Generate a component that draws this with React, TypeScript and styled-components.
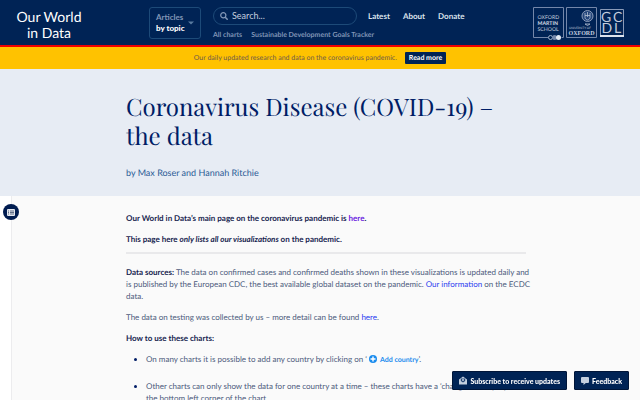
import React from "react";
import styled, { createGlobalStyle } from "styled-components";

const GlobalStyle = createGlobalStyle`
  *, *::before, *::after { box-sizing: border-box; }
  body {
    margin: 0;
    background: #fafafa;
    color: #4d5a7c;
    font-family: Lato, "Liberation Sans", sans-serif;
    font-size: 8px;
    line-height: 12px;
    text-rendering: geometricPrecision;
  }
  a { text-decoration: none; }
`;

const Page = styled.div`
  display: flex;
  flex-direction: column;
  height: 100vh;
  overflow: hidden;
`;

const Header = styled.header`
  display: flex;
  flex: none;
  align-items: flex-start;
  height: 47px;
  padding: 7px 15px 0 16px;
  background: #002355;
  border-bottom: 2px solid #f00000;
`;

const SiteName = styled.a`
  width: 66px;
  margin-right: 67px;
  padding-top: 2px;
  color: #fff;
  font-size: 14px;
  line-height: 16px;
  text-align: center;
  white-space: nowrap;
`;

const TopicButton = styled.button`
  display: flex;
  align-items: center;
  justify-content: space-between;
  width: 52px;
  height: 32px;
  margin-right: 12px;
  padding: 0 6px;
  border: 1px solid #1d4a78;
  border-radius: 3px;
  background: transparent;
  color: #8297b8;
  font: 700 8px/11px Lato, sans-serif;
  text-align: left;
  white-space: nowrap;

  strong { display: block; color: #fff; }
  svg { flex: none; }
`;

const SearchArea = styled.div`
  width: 144px;
  margin-right: 11px;
`;

const SearchBox = styled.label`
  display: flex;
  align-items: center;
  gap: 4px;
  width: 100%;
  height: 18px;
  padding: 0 6px;
  border: 1px solid #1d4a78;
  border-radius: 9px;

  input {
    width: 100%;
    min-width: 0;
    padding: 0;
    border: 0;
    outline: 0;
    background: transparent;
    color: #fff;
    font: 400 9px/12px Lato, sans-serif;
  }
  input::placeholder { color: #c5cfdf; opacity: 1; }
  svg { flex: none; }
`;

const SubLinks = styled.nav`
  display: flex;
  gap: 9px;
  margin-top: 4px;
  white-space: nowrap;

  a { color: #7f94b5; font-size: 7px; font-weight: 700; }
`;

const MainNav = styled.nav`
  display: flex;
  gap: 13px;
  padding-top: 3px;

  a { color: #dbe2ec; font-size: 8px; font-weight: 700; }
`;

const Partners = styled.div`
  display: flex;
  gap: 2px;
  margin-left: auto;

  a, svg { display: block; }
`;

const Alert = styled.div`
  display: flex;
  flex: none;
  align-items: center;
  justify-content: center;
  gap: 8px;
  height: 22px;
  background: #ffc200;
  color: #6e5a4c;
  font-size: 7px;
`;

const ReadMore = styled.a`
  padding: 0 4px;
  border-radius: 1px;
  background: #002355;
  color: #fff;
  font-weight: 700;
`;

const Banner = styled.div`
  flex: none;
  padding: 24px 0 17px 12px;
  background: #e7ecf4;
`;

const Column = styled.div`
  width: 100%;
  max-width: 400px;
  margin: 0 auto;
`;

const Title = styled.h1`
  margin: 0 0 15px;
  color: #001d66;
  font: 400 24px/29px "Playfair Display", "Liberation Serif", serif;
`;

const Byline = styled.div`
  color: #2b5b94;
  font-size: 9px;
  line-height: 13px;
`;

const Body = styled.div`
  display: flex;
  flex: 1;
  min-height: 0;
`;

const Rail = styled.aside`
  flex: none;
  width: 12px;
  padding: 8px 0 0 3px;
  border-right: 1px solid #ececee;
  background: #fff;
`;

const ContentsButton = styled.button`
  display: flex;
  align-items: center;
  justify-content: center;
  width: 16px;
  height: 16px;
  padding: 0;
  border: 0;
  border-radius: 50%;
  background: #001c50;
`;

const Article = styled.article`
  flex: 1;
  padding-top: 16px;

  p { margin: 0 -8px 9px 0; }
  p > strong { color: #17244f; }
  a { color: #2c3ef0; }
  hr { height: 2px; margin: 0 0 12px; border: 0; background: #e9e9eb; }
  ul { margin: 0 -8px 0 0; padding-left: 20px; }
  li { margin-bottom: 15px; }
  li::marker { color: #001d66; }
`;

const Intro = styled.div`
  padding-bottom: 7px;

  p:last-child { margin-bottom: 0; }
`;

const VisitedLink = styled.a`
  && { color: #6a1be0; }
`;

const AddCountry = styled.span`
  color: #1a8cee;
  font-size: 7px;
  font-weight: 700;
  line-height: 1;

  svg { margin-right: 3px; vertical-align: -1px; }
`;

const Tools = styled.div`
  position: fixed;
  right: 11px;
  bottom: 10px;
  display: flex;
  gap: 7px;
`;

const ToolButton = styled.button`
  display: flex;
  align-items: center;
  gap: 3px;
  height: 19px;
  padding: 0 6px;
  border: 1px solid #001538;
  border-radius: 1px;
  background: #002355;
  color: #fff;
  font: 900 7px/12px Lato, sans-serif;
  white-space: nowrap;
`;

const SvgText = styled.text<{ $serif?: boolean }>`
  fill: #c3cddd;
  font-family: ${(p) => (p.$serif ? '"Liberation Serif", serif' : "Lato, sans-serif")};
`;

function MartinLogo() {
  return (
    <svg width="31" height="34" viewBox="0 0 31 34" fill="none" role="img" aria-label="Oxford Martin School">
      <path d="M15 30.5H.5V.5h30v30h-2" stroke="#7487aa" />
      <SvgText x="4.500" y="11.500" fontSize="5.200">OXFORD</SvgText>
      <SvgText x="4.500" y="17.500" fontSize="5.200" fontWeight="900">MARTIN</SvgText>
      <SvgText x="4.500" y="23.500" fontSize="5.200">SCHOOL</SvgText>
      <circle cx="17.500" cy="30.500" r="2" stroke="#9eadc5" />
      <circle cx="21.500" cy="30.500" r="2.500" fill="#7487aa" />
      <circle cx="25.500" cy="30.500" r="2.500" fill="#e2e8f1" />
    </svg>
  );
}

function OxfordLogo() {
  return (
    <svg width="31" height="34" viewBox="0 0 31 34" fill="none" role="img" aria-label="University of Oxford">
      <path d="M.5.5h30v30H.5z" stroke="#7487aa" />
      <circle cx="21.500" cy="9" r="5.500" fill="#24457a" stroke="#8a9bb8" />
      <path d="M19 6v4.500c0 1 1 2 2.500 2.500 1.500-.5 2.500-1.500 2.500-2.500V6M19 8.500h5M21.500 5v5M19 17h5l-2.500 1.500z" stroke="#b4c0d3" strokeWidth=".8" />
      <SvgText x="3" y="21.500" fontSize="3">UNIVERSITY OF</SvgText>
      <SvgText $serif x="2.500" y="27.500" fontSize="6" fontWeight="700">OXFORD</SvgText>
    </svg>
  );
}

function GcdlLogo() {
  return (
    <svg width="26" height="34" viewBox="0 0 26 34" fill="none" role="img" aria-label="GCDL">
      <path d="M1.500 28V2.500h23V28" stroke="#8a9bb8" />
      <path d="M1 29h24" stroke="#dbe2ec" strokeWidth="2" />
      <SvgText x="2" y="14.500" fontSize="14">G</SvgText>
      <SvgText x="14" y="14.500" fontSize="14">C</SvgText>
      <SvgText x="2.500" y="26" fontSize="14">D</SvgText>
      <SvgText x="15" y="26" fontSize="14">L</SvgText>
    </svg>
  );
}

export default function App() {
  return (
    <Page>
      <GlobalStyle />
      <Header>
        <SiteName href="#">Our World<br />in Data</SiteName>
        <TopicButton type="button">
          <span>Articles<strong>by topic</strong></span>
          <svg width="6" height="4" viewBox="0 0 6 4" aria-hidden="true">
            <path d="M0 .5h6L3 3.500z" fill="#597ba0" />
          </svg>
        </TopicButton>
        <SearchArea>
          <SearchBox>
            <svg width="8" height="8" viewBox="0 0 8 8" fill="none" stroke="#8297b8" strokeWidth="1.200" aria-hidden="true">
              <circle cx="3.300" cy="3.300" r="2.600" />
              <path d="M5.200 5.200 7.700 7.700" strokeWidth="1.500" />
            </svg>
            <input type="search" placeholder="Search..." aria-label="Search" />
          </SearchBox>
          <SubLinks aria-label="Shortcuts">
            <a href="#charts">All charts</a>
            <a href="#sdg">Sustainable Development Goals Tracker</a>
          </SubLinks>
        </SearchArea>
        <MainNav aria-label="Main">
          <a href="#latest">Latest</a>
          <a href="#about">About</a>
          <a href="#donate">Donate</a>
        </MainNav>
        <Partners>
          <a href="#martin"><MartinLogo /></a>
          <a href="#oxford"><OxfordLogo /></a>
          <a href="#gcdl"><GcdlLogo /></a>
        </Partners>
      </Header>

      <Alert>
        <span>Our daily updated research and data on the coronavirus pandemic.</span>
        <ReadMore href="#more">Read more</ReadMore>
      </Alert>

      <Banner>
        <Column>
          <Title>Coronavirus Disease (COVID-19) – the data</Title>
          <Byline>by Max Roser and Hannah Ritchie</Byline>
        </Column>
      </Banner>

      <Body>
        <Rail>
          <ContentsButton type="button" aria-label="Open table of contents">
            <svg width="8" height="7" viewBox="0 0 8 7" fill="none" aria-hidden="true">
              <rect width="8" height="7" rx="1" fill="#e4e8f0" />
              <path d="M1 2h1M3 2h4M1 3.500h1M3 3.500h4M1 5h1M3 5h4" stroke="#40506f" strokeWidth=".8" />
            </svg>
          </ContentsButton>
        </Rail>
        <Article>
          <Column>
            <Intro>
              <p><strong>Our World in Data’s main page on the coronavirus pandemic is <VisitedLink href="#here">here</VisitedLink>.</strong></p>
              <p><strong>This page here <em>only lists all our visualizations</em> on the pandemic.</strong></p>
            </Intro>
            <hr />
            <p>
              <strong>Data sources:</strong> The data on confirmed cases and confirmed deaths shown in these
              visualizations is updated daily and is published by the European CDC, the best available global
              dataset on the pandemic. <a href="#ecdc">Our information</a> on the ECDC data.
            </p>
            <p>The data on testing was collected by us – more detail can be found <a href="#testing">here</a>.</p>
            <p><strong>How to use these charts:</strong></p>
            <ul>
              <li>
                On many charts it is possible to add any country by clicking on ‘{" "}
                <AddCountry>
                  <svg width="8" height="8" viewBox="0 0 8 8" aria-hidden="true">
                    <circle cx="4" cy="4" r="4" fill="#1a8cee" />
                    <path d="M4 1.500v5M1.500 4h5" stroke="#fff" strokeWidth="1.400" />
                  </svg>
                  Add country
                </AddCountry>
                ’.
              </li>
              <li>
                Other charts can only show the data for one country at a time – these charts have a ‘change country’ option in
                the bottom left corner of the chart.
              </li>
            </ul>
          </Column>
        </Article>
      </Body>

      <Tools>
        <ToolButton type="button">
          <svg width="8" height="9" viewBox="0 0 8 9" aria-hidden="true">
            <path d="M0 3.500 4 .5l4 3v5H0z" fill="#c4cfde" />
            <path d="M1.800 2.500h4.400v2.500L4 6.500 1.800 5z" fill="#254674" />
            <circle cx="4" cy="4" r="1" fill="#c4cfde" />
          </svg>
          Subscribe to receive updates
        </ToolButton>
        <ToolButton type="button">
          <svg width="8" height="8" viewBox="0 0 8 8" aria-hidden="true">
            <path d="M1 0h6q1 0 1 1v4q0 1-1 1H4.800L2.500 8V6H1Q0 6 0 5V1q0-1 1-1z" fill="#c4cfde" />
          </svg>
          Feedback
        </ToolButton>
      </Tools>
    </Page>
  );
}
